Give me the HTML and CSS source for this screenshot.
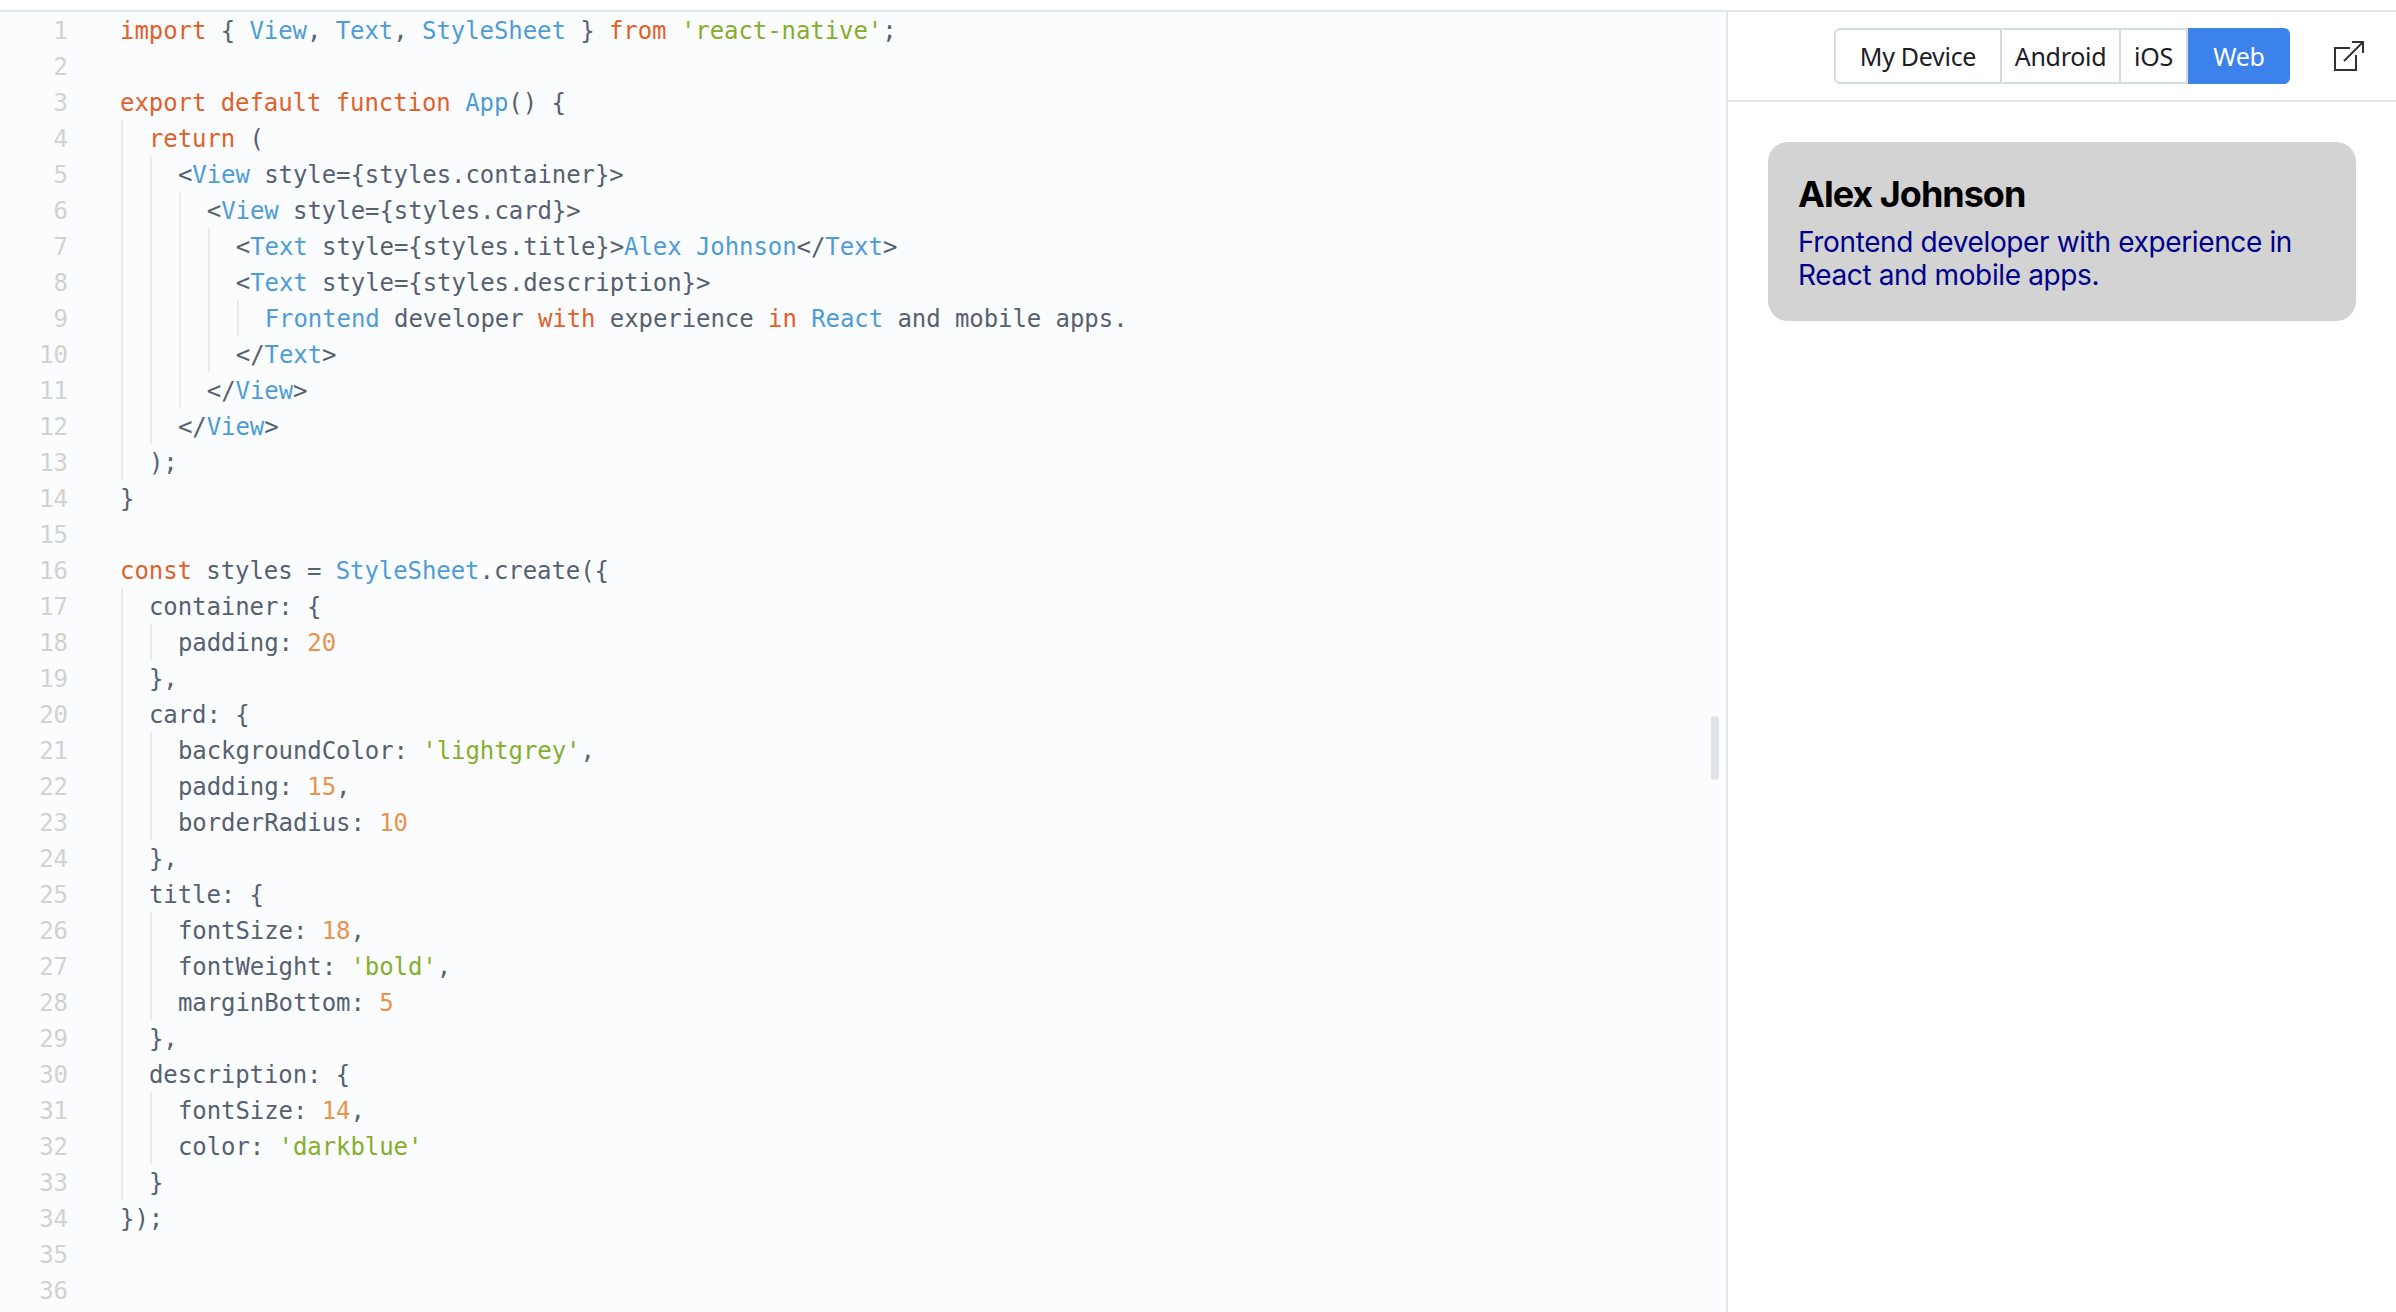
FILE: index.html
```html
<!DOCTYPE html>
<html>
<head>
  <title>Snack</title>
  <link rel="stylesheet" href="styles.css">
</head>
<body>
  <div class="page">
    <div class="editor">
      <div class="numbers">
        <div>1</div><div>2</div><div>3</div><div>4</div><div>5</div><div>6</div><div>7</div><div>8</div><div>9</div>
        <div>10</div><div>11</div><div>12</div><div>13</div><div>14</div><div>15</div><div>16</div><div>17</div><div>18</div>
        <div>19</div><div>20</div><div>21</div><div>22</div><div>23</div><div>24</div><div>25</div><div>26</div><div>27</div>
        <div>28</div><div>29</div><div>30</div><div>31</div><div>32</div><div>33</div><div>34</div><div>35</div><div>36</div>
      </div>
      <div class="code">
        <div class="line"><span class="kw">import</span> { <span class="id">View</span>, <span class="id">Text</span>, <span class="id">StyleSheet</span> } <span class="kw">from</span> <span class="str">'react-native'</span>;</div>
        <div class="line"></div>
        <div class="line"><span class="kw">export default function</span> <span class="id">App</span>() {</div>
        <div class="line"><span class="ind"></span><span class="kw">return</span> (</div>
        <div class="line"><span class="ind"></span><span class="ind"></span>&lt;<span class="id">View</span> style={styles.container}&gt;</div>
        <div class="line"><span class="ind"></span><span class="ind"></span><span class="ind"></span>&lt;<span class="id">View</span> style={styles.card}&gt;</div>
        <div class="line"><span class="ind"></span><span class="ind"></span><span class="ind"></span><span class="ind"></span>&lt;<span class="id">Text</span> style={styles.title}&gt;<span class="id">Alex Johnson</span>&lt;/<span class="id">Text</span>&gt;</div>
        <div class="line"><span class="ind"></span><span class="ind"></span><span class="ind"></span><span class="ind"></span>&lt;<span class="id">Text</span> style={styles.description}&gt;</div>
        <div class="line"><span class="ind"></span><span class="ind"></span><span class="ind"></span><span class="ind"></span><span class="ind"></span><span class="id">Frontend</span> developer <span class="kw">with</span> experience <span class="kw">in</span> <span class="id">React</span> and mobile apps.</div>
        <div class="line"><span class="ind"></span><span class="ind"></span><span class="ind"></span><span class="ind"></span>&lt;/<span class="id">Text</span>&gt;</div>
        <div class="line"><span class="ind"></span><span class="ind"></span><span class="ind"></span>&lt;/<span class="id">View</span>&gt;</div>
        <div class="line"><span class="ind"></span><span class="ind"></span>&lt;/<span class="id">View</span>&gt;</div>
        <div class="line"><span class="ind"></span>);</div>
        <div class="line">}</div>
        <div class="line"></div>
        <div class="line"><span class="kw">const</span> styles = <span class="id">StyleSheet</span>.create({</div>
        <div class="line"><span class="ind"></span>container: {</div>
        <div class="line"><span class="ind"></span><span class="ind"></span>padding: <span class="num">20</span></div>
        <div class="line"><span class="ind"></span>},</div>
        <div class="line"><span class="ind"></span>card: {</div>
        <div class="line"><span class="ind"></span><span class="ind"></span>backgroundColor: <span class="str">'lightgrey'</span>,</div>
        <div class="line"><span class="ind"></span><span class="ind"></span>padding: <span class="num">15</span>,</div>
        <div class="line"><span class="ind"></span><span class="ind"></span>borderRadius: <span class="num">10</span></div>
        <div class="line"><span class="ind"></span>},</div>
        <div class="line"><span class="ind"></span>title: {</div>
        <div class="line"><span class="ind"></span><span class="ind"></span>fontSize: <span class="num">18</span>,</div>
        <div class="line"><span class="ind"></span><span class="ind"></span>fontWeight: <span class="str">'bold'</span>,</div>
        <div class="line"><span class="ind"></span><span class="ind"></span>marginBottom: <span class="num">5</span></div>
        <div class="line"><span class="ind"></span>},</div>
        <div class="line"><span class="ind"></span>description: {</div>
        <div class="line"><span class="ind"></span><span class="ind"></span>fontSize: <span class="num">14</span>,</div>
        <div class="line"><span class="ind"></span><span class="ind"></span>color: <span class="str">'darkblue'</span></div>
        <div class="line"><span class="ind"></span>}</div>
        <div class="line">});</div>
        <div class="line"></div>
        <div class="line"></div>
      </div>
      <div class="scrollbar"></div>
    </div>
    <div class="preview">
      <div class="toolbar">
        <div class="tabs">
          <div class="tab tab-device">My Device</div>
          <div class="tab tab-android">Android</div>
          <div class="tab tab-ios">iOS</div>
          <div class="tab tab-web">Web</div>
        </div>
        <svg class="open-icon" viewBox="0 0 30 30" xmlns="http://www.w3.org/2000/svg">
          <path d="M16 7H1v22h21V14" fill="none" stroke="#2f3337" stroke-width="2"/>
          <path d="M10 20L29 1M18 1h11v11" fill="none" stroke="#2f3337" stroke-width="2"/>
        </svg>
      </div>
      <div class="app">
        <div class="card">
          <div class="card-title">Alex Johnson</div>
          <div class="card-text">Frontend developer with experience in React and mobile apps.</div>
        </div>
      </div>
    </div>
  </div>
</body>
</html>
```

FILE: styles.css
```css
html, body {
  margin: 0;
  height: 100%;
  overflow: hidden;
  background-color: white;
}
.page {
  display: flex;
  height: 1300px;
  margin-top: 10px;
  border-top: 2px solid #e3e5e8;
}
.editor {
  position: relative;
  display: flex;
  width: 1726px;
  background-color: #fbfcfe;
  border-right: 2px solid #e3e5e8;
  font-family: "DejaVu Sans Mono", monospace;
  font-size: 24px;
  letter-spacing: -0.07px;
  line-height: 38px;
  color: #566170;
}
.numbers {
  width: 68px;
  margin-right: 52px;
  text-align: right;
  color: #d0d2d4;
}
.numbers div {
  height: 36px;
}
.line {
  height: 36px;
  white-space: pre;
}
.ind {
  display: inline-block;
  width: 28.95px;
  height: 36px;
  vertical-align: top;
  background: linear-gradient(#e9ebed, #e9ebed) 1px 0 / 2px 100% no-repeat;
}
.kw {
  color: #e2602a;
}
.id {
  color: #4e9cd6;
}
.str {
  color: #85ae2d;
}
.num {
  color: #e8934c;
}
.scrollbar {
  position: absolute;
  top: 704px;
  right: 7px;
  width: 8px;
  height: 64px;
  border-radius: 4px;
  background-color: #e0e3e6;
}
.preview {
  flex: 1;
}
.toolbar {
  display: flex;
  align-items: center;
  justify-content: flex-end;
  box-sizing: border-box;
  height: 90px;
  padding-right: 32px;
  border-bottom: 2px solid #e3e5e8;
}
.tabs {
  display: flex;
  height: 56px;
  margin-right: 44px;
  font-family: "Noto Sans", sans-serif;
  font-size: 25px;
  letter-spacing: -0.3px;
  color: #1c2024;
}
.tab {
  display: flex;
  align-items: center;
  justify-content: center;
  box-sizing: border-box;
  border: 2px solid #d6dbe0;
  border-left: none;
}
.tab-device {
  width: 168px;
  border-left: 2px solid #d6dbe0;
  border-radius: 6px 0 0 6px;
}
.tab-android {
  width: 119px;
}
.tab-ios {
  width: 67px;
}
.tab-web {
  width: 102px;
  color: white;
  background-color: #3b82ea;
  border: none;
  border-radius: 0 6px 6px 0;
}
.open-icon {
  width: 30px;
  height: 30px;
}
.app {
  padding: 40px;
}
.card {
  width: 588px;
  padding: 30px 30px 29px;
  box-sizing: border-box;
  background-color: lightgrey;
  border-radius: 20px;
  font-family: Inter, sans-serif;
}
.card-title {
  margin-bottom: 10px;
  font-size: 36px;
  font-weight: 700;
  letter-spacing: -1px;
  color: black;
}
.card-text {
  font-size: 28px;
  letter-spacing: -0.37px;
  line-height: 33px;
  color: darkblue;
}
```
